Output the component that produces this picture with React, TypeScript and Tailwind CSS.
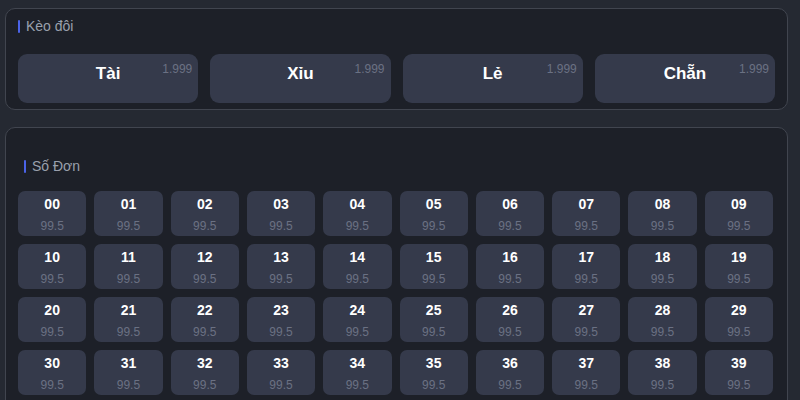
const pairs = [
  { label: 'Tài', odds: '1.999' },
  { label: 'Xỉu', odds: '1.999' },
  { label: 'Lẻ', odds: '1.999' },
  { label: 'Chẵn', odds: '1.999' },
];

const numbers = Array.from({ length: 50 }, (_, i) => String(i).padStart(2, '0'));

export default function App() {
  return (
    <div className="w-[800px] h-[400px] overflow-hidden bg-[#252932] pt-2 px-[5px] font-['Liberation_Sans',Arial,sans-serif]">
      {/* Kèo đôi */}
      <section className="w-[783px] rounded-[10px] border border-[#41454f] bg-[#1d2028] pt-[8px] pb-[6px] pl-3 pr-3">
        <SectionTitle text="Kèo đôi" />
        <div className="mt-[19px] grid grid-cols-4 gap-3">
          {pairs.map((p) => (
            <button
              key={p.label}
              className="relative h-[49px] rounded-[9px] bg-[#353a4b] text-white text-[17px] font-semibold flex items-center justify-center"
            >
              <span className="-mt-[9px]">{p.label}</span>
              <span className="absolute top-[6px] right-[6px] text-[12px] font-normal text-[#6b7183]">{p.odds}</span>
            </button>
          ))}
        </div>
      </section>

      {/* Số Đơn */}
      <section className="mt-[17px] w-[783px] h-[300px] rounded-[10px] border border-[#41454f] bg-[#1d2028] pt-[29px] pl-3 pr-[14px]">
        <div className="pl-[6px]">
          <SectionTitle text="Số Đơn" />
        </div>
        <div className="mt-[16px] grid grid-cols-10 gap-x-2 gap-y-2">
          {numbers.map((n) => (
            <div
              key={n}
              className="h-[45px] rounded-[7px] bg-[#353a4b] flex flex-col items-center pt-[4px]"
            >
              <span className="text-white text-[14px] font-semibold leading-[18px]">{n}</span>
              <span className="mt-[5px] text-[#6b7183] text-[12px] leading-[16px]">99.5</span>
            </div>
          ))}
        </div>
      </section>
    </div>
  );
}

function SectionTitle({ text }: { text: string }) {
  return (
    <div className="flex items-center gap-[6px] h-[18px]">
      <span className="w-[2px] h-[13px] bg-[#4b63e8] rounded-sm" />
      <span className="text-[14px] text-[#9aa0ad]">{text}</span>
    </div>
  );
}
